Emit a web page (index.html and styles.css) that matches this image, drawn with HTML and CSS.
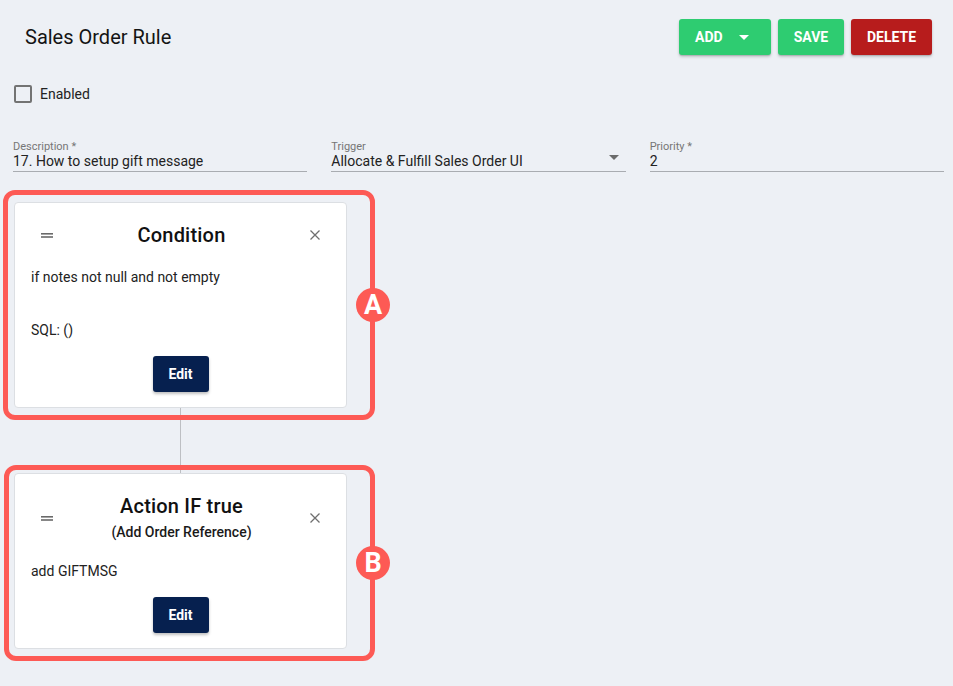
FILE: index.html
```html
<!DOCTYPE html>
<html lang="en">
<head>
<meta charset="utf-8">
<title>Sales Order Rule</title>
<link rel="stylesheet" href="styles.css">
</head>
<body>
<div class="page">
  <header class="topbar">
    <h1 class="title">Sales Order Rule</h1>
    <div class="actions">
      <button class="btn btn-green btn-add">ADD
        <svg class="caret" width="10" height="5" viewBox="0 0 10 5"><path d="M0 0h10L5 5z" fill="#fff"/></svg>
      </button>
      <button class="btn btn-green btn-save">SAVE</button>
      <button class="btn btn-red">DELETE</button>
    </div>
  </header>

  <label class="check-row">
    <span class="checkbox"></span>
    <span class="check-label">Enabled</span>
  </label>

  <div class="fields">
    <div class="field">
      <div class="field-label">Description *</div>
      <div class="field-value">17. How to setup gift message</div>
    </div>
    <div class="field">
      <div class="field-label">Trigger</div>
      <div class="field-value select">Allocate &amp; Fulfill Sales Order UI
        <svg class="select-caret" width="10" height="5" viewBox="0 0 10 5"><path d="M0 0h10L5 5z" fill="#6b6b6b"/></svg>
      </div>
    </div>
    <div class="field">
      <div class="field-label">Priority *</div>
      <div class="field-value">2</div>
    </div>
  </div>

  <div class="flow">
    <div class="card card-a">
      <div class="card-head">
        <svg class="handle" width="12" height="5" viewBox="0 0 12 5"><rect x="0" y="0" width="12" height="1.6" fill="#6a6a6a"/><rect x="0" y="3.2" width="12" height="1.6" fill="#6a6a6a"/></svg>
        <div class="head-text">
          <div class="card-title">Condition</div>
        </div>
        <svg class="close" width="10" height="10" viewBox="0 0 10 10"><path d="M0.5 0.5L9.5 9.5M9.5 0.5L0.5 9.5" stroke="#6f6f6f" stroke-width="1.3"/></svg>
      </div>
      <p class="card-text">if notes not null and not empty</p>
      <p class="card-text sql">SQL: ()</p>
      <div class="card-foot"><button class="btn-edit">Edit</button></div>
      <div class="mark mark-a"><span class="badge">A</span></div>
    </div>

    <div class="connector"></div>

    <div class="card card-b">
      <div class="card-head">
        <svg class="handle" width="12" height="5" viewBox="0 0 12 5"><rect x="0" y="0" width="12" height="1.6" fill="#6a6a6a"/><rect x="0" y="3.2" width="12" height="1.6" fill="#6a6a6a"/></svg>
        <div class="head-text">
          <div class="card-title">Action IF true</div>
          <div class="card-sub">(Add Order Reference)</div>
        </div>
        <svg class="close" width="10" height="10" viewBox="0 0 10 10"><path d="M0.5 0.5L9.5 9.5M9.5 0.5L0.5 9.5" stroke="#6f6f6f" stroke-width="1.3"/></svg>
      </div>
      <p class="card-text gift">add GIFTMSG</p>
      <div class="card-foot"><button class="btn-edit">Edit</button></div>
      <div class="mark mark-b"><span class="badge">B</span></div>
    </div>
  </div>
</div>
</body>
</html>
```

FILE: styles.css
```css
* { box-sizing: border-box; }

html, body {
  margin: 0;
  padding: 0;
  background: #edf0f5;
  font-family: Roboto, "Liberation Sans", Arial, sans-serif;
  color: #1f1f1f;
}

.page {
  width: 953px;
  height: 686px;
  overflow: hidden;
}

.topbar {
  display: flex;
  align-items: center;
  justify-content: space-between;
  padding: 19px 21px 0 25px;
  height: 55px;
}

.title {
  margin: 0;
  font-size: 20px;
  font-weight: 400;
  color: #141414;
  line-height: 36px;
}

.actions {
  display: flex;
  gap: 7px;
  height: 36px;
}

.btn {
  height: 36px;
  border: none;
  border-radius: 3px;
  padding: 0 16px;
  font-family: Roboto, "Liberation Sans", Arial, sans-serif;
  font-size: 14px;
  font-weight: 700;
  letter-spacing: 0;
  color: #fff;
  display: flex;
  align-items: center;
  justify-content: center;
  box-shadow: 0 2px 3px rgba(0,0,0,0.18), 0 1px 1px rgba(0,0,0,0.12);
}

.btn-green { background: #2ecc71; }
.btn-red { background: #b71c1c; width: 81px; }
.btn-save { width: 66px; }
.btn-add { width: 92px; justify-content: flex-start; }
.btn-add .caret { margin-left: 16px; }

.check-row {
  display: flex;
  align-items: center;
  margin: 30px 0 0 14px;
  height: 18px;
}

.checkbox {
  width: 18px;
  height: 18px;
  border: 2px solid #737373;
  border-radius: 2px;
}

.check-label {
  margin-left: 8px;
  font-size: 14px;
  color: #222;
}

.fields {
  display: flex;
  gap: 24px;
  margin: 37px 9px 0 13px;
}

.field {
  flex: 1;
  border-bottom: 1px solid #a9acb1;
  height: 32px;
}

.field-label {
  font-size: 11px;
  color: #767676;
  line-height: 13px;
}

.field-value {
  font-size: 14px;
  color: #222;
  line-height: 17px;
}

.field-value.select {
  display: flex;
  align-items: center;
  justify-content: space-between;
  padding-right: 7px;
}

.select-caret { position: relative; top: -4px; }

.flow {
  display: flex;
  flex-direction: column;
  margin: 30px 0 0 14px;
  width: 333px;
}

.card {
  position: relative;
  background: #fff;
  border: 1px solid #dcdfe3;
  border-radius: 4px;
  padding: 16px 16px 15px 16px;
}

.card-head {
  display: flex;
  align-items: center;
  justify-content: space-between;
  padding: 0 10px 0 10px;
}

.head-text {
  text-align: center;
  flex: 1;
}

.card-title {
  font-size: 20px;
  font-weight: 500;
  letter-spacing: 0.2px;
  line-height: 32px;
  color: #111;
}

.card-sub {
  font-size: 14px;
  font-weight: 500;
  line-height: 20px;
  color: #1a1a1a;
}

.card-b .card-head .handle,
.card-b .card-head .close { margin-top: 4px; }

.card-text {
  margin: 16px 0 0 0;
  font-size: 14px;
  line-height: 20px;
  color: #222;
}

.card-text.sql { margin-top: 33px; }
.card-text.gift { margin-top: 19px; }

.card-foot {
  display: flex;
  justify-content: center;
  margin-top: 16px;
}

.btn-edit {
  width: 56px;
  height: 36px;
  background: #06204f;
  color: #fff;
  border: none;
  border-radius: 3px;
  font-family: Roboto, "Liberation Sans", Arial, sans-serif;
  font-size: 14px;
  font-weight: 700;
  box-shadow: 0 2px 3px rgba(0,0,0,0.25);
}

.connector {
  width: 1px;
  height: 65px;
  background: #bdbfc3;
  margin-left: 166px;
}

.mark {
  position: absolute;
  border: 5px solid #fd5a55;
  border-radius: 12px;
  pointer-events: none;
}

.mark-a { top: -13px; left: -12px; right: -29px; bottom: -13px; }
.mark-b { top: -9px; left: -11px; right: -29px; bottom: -13px; }

.badge {
  position: absolute;
  right: -20px;
  top: 50%;
  margin-top: -17px;
  width: 34px;
  height: 34px;
  border-radius: 50%;
  background: #fd5a55;
  color: #fff;
  font-family: Roboto, "Liberation Sans", Arial, sans-serif;
  font-size: 27px;
  font-weight: 700;
  line-height: 34px;
  text-align: center;
}
```
